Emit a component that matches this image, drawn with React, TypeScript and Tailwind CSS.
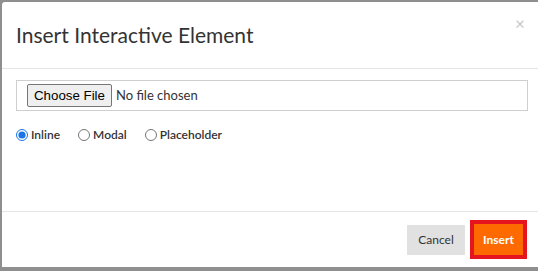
import React from "react";

export default function App() {
  return (
    <div className="w-[538px] h-[271px] bg-[#8f8f8f] pt-[2px] pl-[2px] pb-[4px] overflow-hidden" style={{ fontFamily: "Lato, 'Open Sans', sans-serif" }}>
      <div className="h-full w-[560px] bg-white rounded-tl-[3px] flex flex-col">
        <div className="h-[67px] border-b border-[#e5e5e5] flex items-center justify-between pl-[14px] pr-[58px] relative">
          <h4 className="text-[21px] text-[#333] font-normal leading-none pb-[2px]">Insert Interactive Element</h4>
          <span className="absolute left-[513px] top-[13px] text-[#c8c8c8] text-[17px] leading-none">×</span>
        </div>
        <div className="flex-1 pl-[14px] pt-[11px]">
          <div className="w-[512px] h-[31px] border border-[#cfcfcf] flex items-center pl-[10px]">
            <input type="file" className="text-[13px] text-[#333] font-['Lato'] file:mr-[4px] file:px-[6px] file:py-[1px] file:border file:border-[#767676] file:rounded-[2px] file:bg-[#efefef] file:text-[#000] file:text-[13.3px] file:font-['Liberation_Sans']" />
          </div>
          <div className="flex items-center gap-[18px] mt-[15px] text-[12px] text-[#333] font-semibold">
            <label className="flex items-center gap-[3px]">
              <input type="radio" name="m" defaultChecked className="m-0 w-[12px] h-[12px] accent-[#1a73e8]" />
              Inline
            </label>
            <label className="flex items-center gap-[3px]">
              <input type="radio" name="m" className="m-0 w-[12px] h-[12px]" />
              Modal
            </label>
            <label className="flex items-center gap-[3px]">
              <input type="radio" name="m" className="m-0 w-[12px] h-[12px]" />
              Placeholder
            </label>
          </div>
        </div>
        <div className="h-[56px] border-t border-[#e5e5e5] flex items-center justify-start pl-[405px] gap-[5px]">
          <button className="w-[58px] h-[30px] bg-[#e1e1e1] text-[#333] text-[12px]">Cancel</button>
          <button className="w-[57px] h-[39px] bg-[#ff6a00] border-[4px] border-[#e5141f] text-white text-[12px] font-bold">Insert</button>
        </div>
      </div>
    </div>
  );
}
